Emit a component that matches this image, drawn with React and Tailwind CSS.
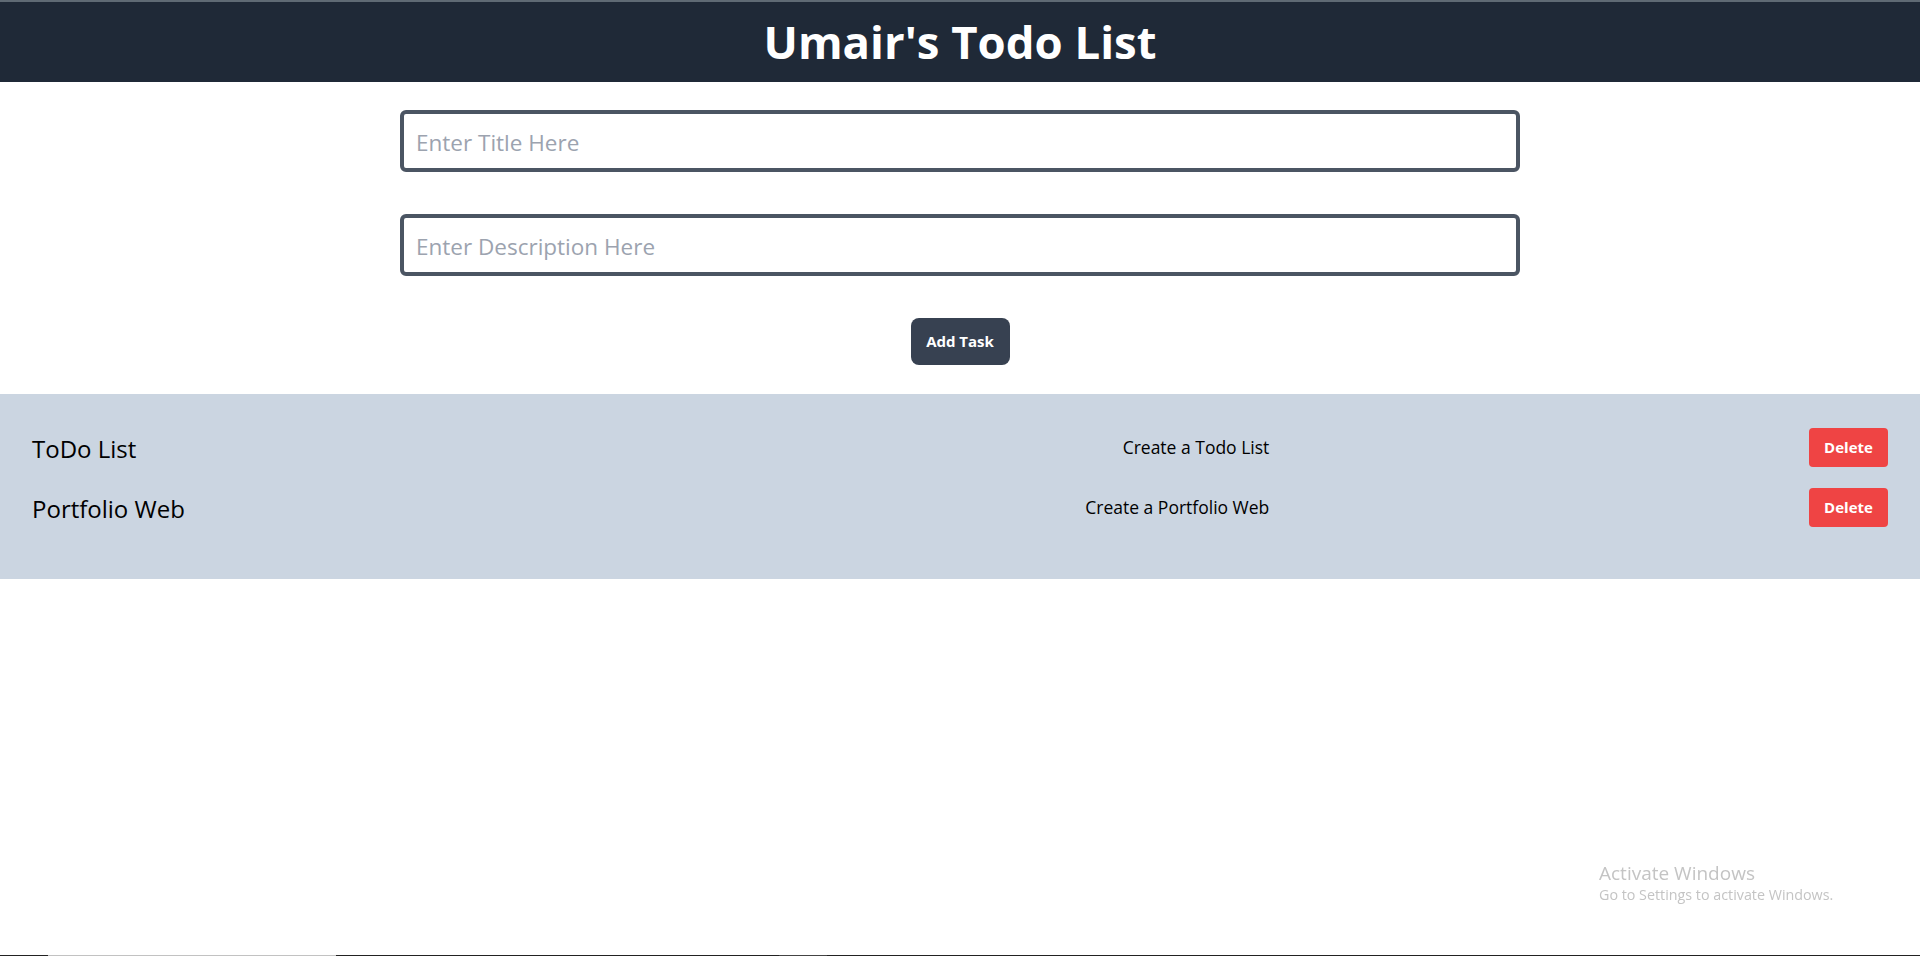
import React from "react";

const tasks = [
	{ title: "ToDo List", desc: "Create a Todo List" },
	{ title: "Portfolio Web", desc: "Create a Portfolio Web" },
];

export default function App() {
	return (
		<div className="relative min-h-screen bg-white font-['Open_Sans','Noto_Sans',sans-serif] text-black">
			{/* Header */}
			<header className="h-[82px] bg-[#1f2937] border-t-2 border-[#5f6a74] flex items-center justify-center">
				<h1 className="text-[45.5px] font-bold text-white leading-none">
					Umair's Todo List
				</h1>
			</header>

			{/* Form */}
			<div className="flex flex-col items-center pt-[28px]">
				<input
					type="text"
					placeholder="Enter Title Here"
					className="w-7/12 h-[62px] border-4 border-[#4b5563] rounded-md px-3 pt-[2px] text-[22.5px] placeholder:text-[#9ca3af] outline-none"
				/>
				<input
					type="text"
					placeholder="Enter Description Here"
					className="w-7/12 h-[62px] mt-[42px] border-4 border-[#4b5563] rounded-md px-3 pt-[2px] text-[22.5px] placeholder:text-[#9ca3af] outline-none"
				/>
				<button className="mt-[42px] w-[99px] h-[47px] bg-[#374151] text-white font-bold text-[15px] rounded-lg">
					Add Task
				</button>
			</div>

			{/* Task list */}
			<div className="mt-[29px] bg-[#cbd5e1] px-8 pt-[33px] pb-[52px] flex flex-col gap-5">
				{tasks.map((t) => (
					<div key={t.title} className="grid grid-cols-3 items-center h-10">
						<div className="text-2xl pt-[3px]">{t.title}</div>
						<div className="text-[17.5px] text-right">{t.desc}</div>
						<div className="flex justify-end">
							<button className="w-[79px] h-[39px] bg-[#ef4444] text-white font-bold text-[15px] rounded">
								Delete
							</button>
						</div>
					</div>
				))}
			</div>

			{/* Windows watermark */}
			<div className="fixed left-[1599px] top-[861px] text-[#c4c4c4] pointer-events-none">
				<div className="text-[19px] leading-[24px]">Activate Windows</div>
				<div className="text-[14.3px] leading-[20px]">
					Go to Settings to activate Windows.
				</div>
			</div>

			{/* taskbar edge */}
			<div className="fixed bottom-0 left-0 w-full h-px flex">
				<div className="w-[48px] bg-[#222]" />
				<div className="w-[288px] bg-[#c2c2c2]" />
				<div className="w-[443px] bg-[#222]" />
				<div className="w-[48px] bg-[#444]" />
				<div className="flex-1 bg-[#222]" />
			</div>
		</div>
	);
}
